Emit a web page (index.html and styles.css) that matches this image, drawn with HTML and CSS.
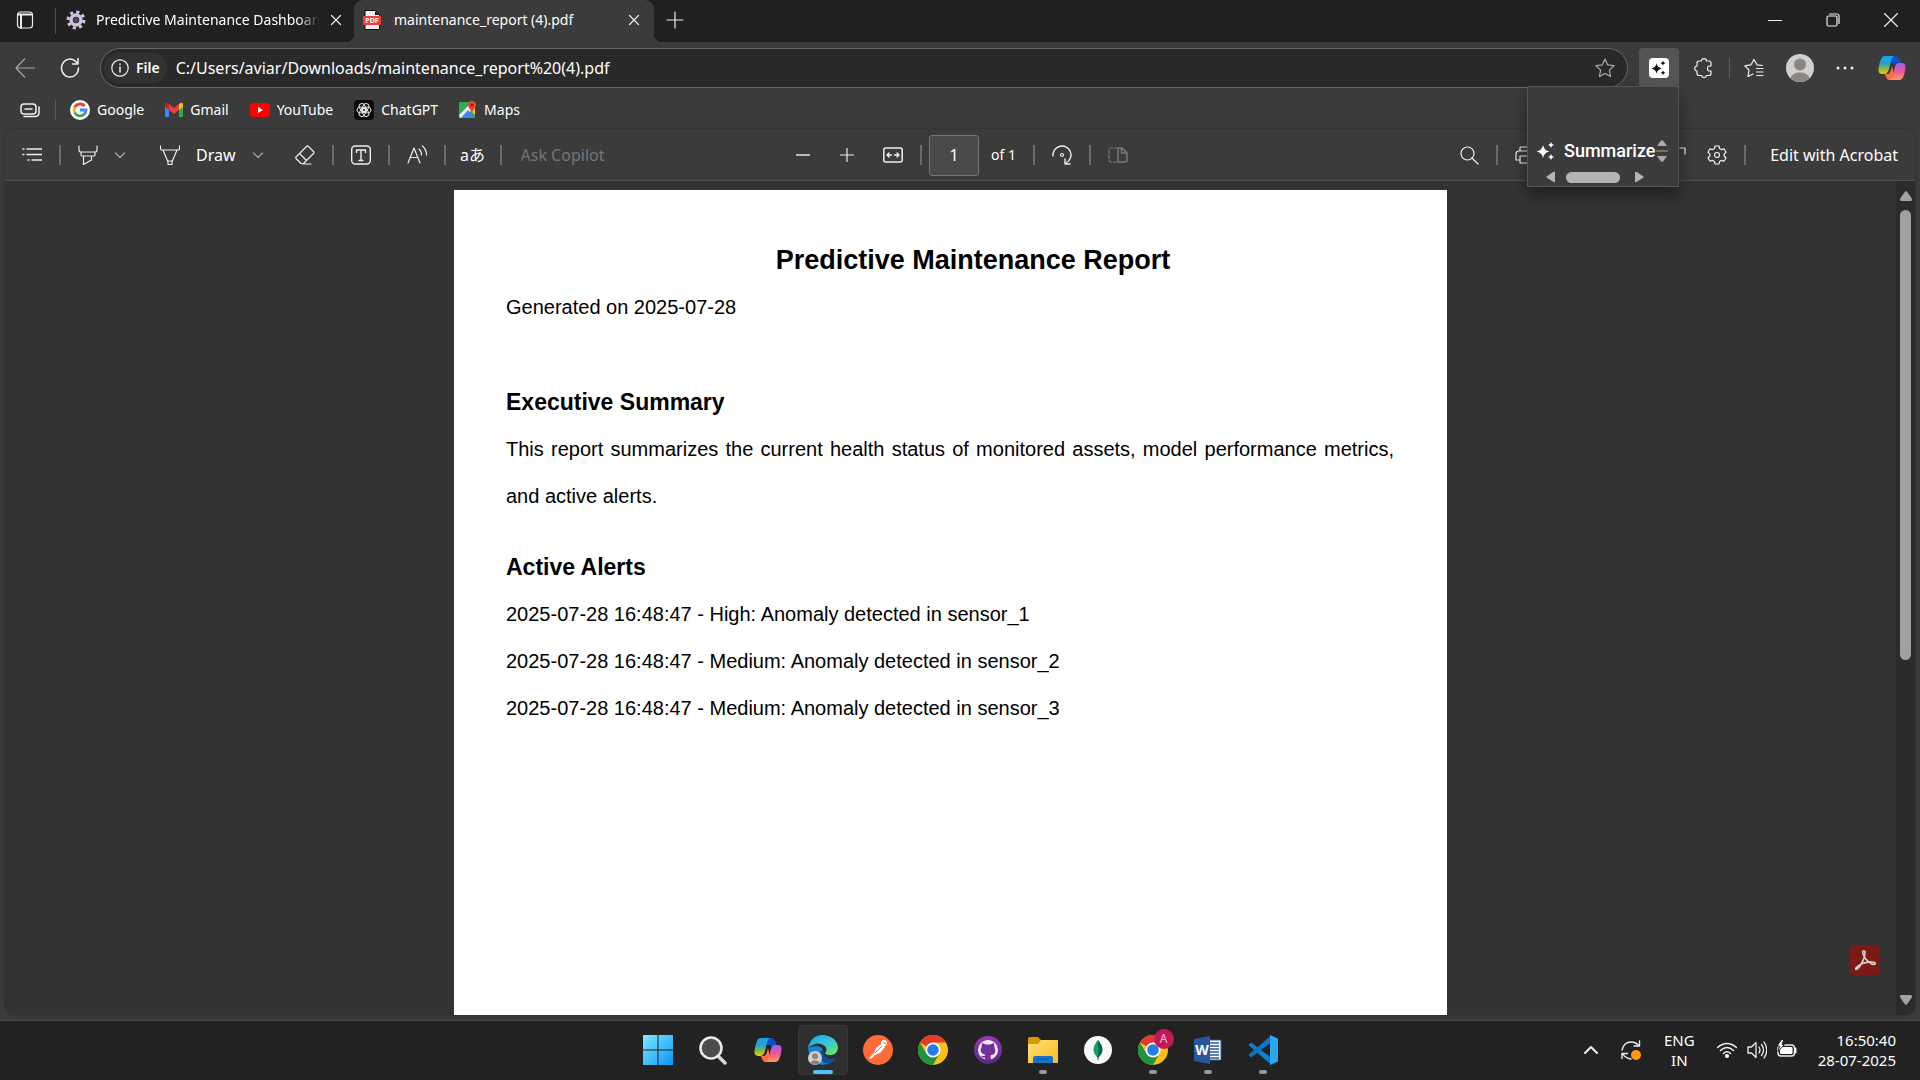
FILE: index.html
```html
<!DOCTYPE html>
<html lang="en">
<head>
<meta charset="utf-8">
<title>maintenance_report (4).pdf</title>
<link rel="stylesheet" href="styles.css">
</head>
<body>
<svg class="defs" aria-hidden="true">
  <defs>
    <linearGradient id="cpA" x1="0" y1="0" x2="0" y2="1"><stop offset="0" stop-color="#13a5ee"/><stop offset=".4" stop-color="#2b9fd0"/><stop offset=".7" stop-color="#7cba4c"/><stop offset="1" stop-color="#fdc500"/></linearGradient>
    <linearGradient id="cpB" x1="0" y1="0" x2="0" y2="1"><stop offset="0" stop-color="#a35af0"/><stop offset=".5" stop-color="#e85a9c"/><stop offset="1" stop-color="#ff9a52"/></linearGradient>
    <linearGradient id="win" x1="0" y1="0" x2="1" y2="1"><stop offset="0" stop-color="#7cecff"/><stop offset="1" stop-color="#0a93f5"/></linearGradient>
    <linearGradient id="edgeTop" x1="0" y1="0" x2="1" y2="1"><stop offset="0" stop-color="#1da5e0"/><stop offset=".5" stop-color="#35c4dc"/><stop offset="1" stop-color="#6ff04c"/></linearGradient>
    <linearGradient id="fold" x1="0" y1="0" x2="1" y2="1"><stop offset="0" stop-color="#ffe07a"/><stop offset="1" stop-color="#fdbc1d"/></linearGradient>
    <linearGradient id="gh" x1="0" y1="0" x2="0" y2="1"><stop offset="0" stop-color="#9a3bb5"/><stop offset="1" stop-color="#56267f"/></linearGradient>
    <symbol id="copilot" viewBox="0 0 28 28">
      <path d="M17 2h-2L12 9l5 0 1 4h5c0-5-2-11-6-11z" fill="#0f4fd0"/>
      <path d="M7 2h9c-2 1-3 4-4 9-1 5-2 8-5 9H4c-4 0-4-4-3-8C2.500 5 4 2 7 2z" fill="url(#cpA)"/>
      <path d="M11 26c-3 0-3-6-5-6h4c2 0 3-4 4-8l2 8-2 6z" fill="#ff6b3d"/>
      <path d="M21 9h3c4 0 4 4 3 8-1.500 7-3 9-6 9h-10c3-1 4-4 5-9 1-5 2-8 5-8z" fill="url(#cpB)"/>
    </symbol>
    <symbol id="chrome" viewBox="0 0 30 30">
      <circle cx="15" cy="15" r="15" fill="#fbc116"/>
      <path d="M15 15 2 7.500A15 15 0 0 1 28 7.500H15z" fill="#e33b2e"/>
      <path d="M2 7.500A15 15 0 0 0 15 30l6.500-11.200L15 15 8.500 18.800z" fill="#229342"/>
      <circle cx="15" cy="15" r="7.500" fill="#fff"/><circle cx="15" cy="15" r="5.800" fill="#2a7bea"/>
    </symbol>
    <symbol id="close" viewBox="0 0 12 12"><path d="M1.500 1.500l9 9M10.500 1.500l-9 9"/></symbol>
    <symbol id="chev" viewBox="0 0 12 12"><path d="M1.500 4 6 8.500 10.500 4"/></symbol>
    <symbol id="person" viewBox="0 0 28 28"><circle cx="14" cy="14" r="14" fill="#d2d0cf"/><circle cx="14" cy="10.500" r="6" fill="#8b8683"/><path d="M4.500 24a10 8 0 0 1 19 0 14 14 0 0 1-19 0z" fill="#8b8683"/></symbol>
    <symbol id="sparkle" viewBox="0 0 20 20"><path d="M7 4q1 5.500 6.500 6.500Q8 11.500 7 17 6 11.500.5 10.500 6 9.500 7 4zM15 1q.5 2.500 3 3-2.500.5-3 3-.5-2.500-3-3 2.500-.5 3-3zM15 13q.5 2.500 3 3-2.500.5-3 3-.5-2.500-3-3 2.500-.5 3-3z" fill="currentColor" stroke="none"/></symbol>
    <symbol id="cog" viewBox="0 0 20 20"><path d="M8 1h4l.6 2.600 1.700 1L17 3.800l2 3.500-1.900 1.800v1.900L19 12.700l-2 3.500-2.700-.8-1.700 1L12 19H8l-.6-2.600-1.700-1-2.700.8-2-3.500L2.900 11V9.100L1 7.300l2-3.500 2.700.8 1.700-1z"/><circle cx="10" cy="10" r="2.500"/></symbol>
  </defs>
</svg>
<div class="screen">
  <header class="tabstrip">
    <button class="tab-menu" aria-label="Tab actions"><svg class="ic i18" viewBox="0 0 18 18"><rect x="1.500" y="1" width="15" height="16" rx="3"/><path d="M2 3.500h14M5 4v13" stroke-width="2"/></svg></button>
    <span class="divider"></span>
    <div class="tab">
      <svg class="i20" viewBox="0 0 20 20"><g fill="none" stroke="#cfc3df"><circle cx="10" cy="10" r="5" stroke-width="3.500"/><circle cx="10" cy="10" r="8" stroke-width="3" stroke-dasharray="3.140 3.140"/></g><circle cx="10" cy="10" r="2.800" fill="#51435f"/></svg>
      <span class="tab-title fade">Predictive Maintenance Dashboard</span>
      <button aria-label="Close tab"><svg class="ic i12"><use href="#close"/></svg></button>
    </div>
    <div class="tab active">
      <svg class="i20" viewBox="0 0 20 20"><path d="M3 .5h10.500l4 4v15H3z" fill="#eee" stroke="#111"/><path d="M13 1v4h4.500z" fill="#111"/><rect x="1" y="6" width="18" height="9" rx="1" fill="#f13b3f"/><text x="10" y="13" text-anchor="middle" class="pdf-mark">PDF</text></svg>
      <span class="tab-title">maintenance_report (4).pdf</span>
      <button aria-label="Close tab"><svg class="ic i12"><use href="#close"/></svg></button>
    </div>
    <button class="new-tab" aria-label="New tab"><svg class="ic i18" viewBox="0 0 18 18"><path d="M9 1v16M1 9h16"/></svg></button>
    <div class="window-buttons">
      <button aria-label="Minimize"><svg class="ic i14" viewBox="0 0 14 14"><path d="M.5 7.500h13"/></svg></button>
      <button aria-label="Restore"><svg class="ic i14" viewBox="0 0 14 14"><rect x="1" y="3" width="10" height="10" rx="1.500"/><path d="M3.500 1h7.500q2 0 2 2v7.500"/></svg></button>
      <button aria-label="Close"><svg class="ic i14" viewBox="0 0 14 14"><path d="M.5.5l13 13M13.500.5l-13 13"/></svg></button>
    </div>
  </header>

  <div class="address-row">
    <button class="nav dim" aria-label="Back"><svg class="ic i20" viewBox="0 0 20 20"><path d="M19.500 10H1M9.500 1 1 10l8.500 9"/></svg></button>
    <button class="nav" aria-label="Refresh"><svg class="ic i20" viewBox="0 0 20 20"><path d="M18.500 10A8.500 9 0 1 1 15 2.800L18 6M18 .5V6h-5.500" stroke-width="1.500"/></svg></button>
    <div class="omnibox">
      <button class="site-info"><svg class="ic i18" viewBox="0 0 18 18"><circle cx="9" cy="9" r="8.200"/><path d="M9 8v5M9 5v.5" stroke-width="1.500"/></svg>File</button>
      <input class="url" aria-label="Address" value="C:/Users/aviar/Downloads/maintenance_report%20(4).pdf">
      <button class="star" aria-label="Add to favorites"><svg class="ic i20" viewBox="0 0 20 20"><path d="M10 1l2.700 5.900 6.300.8-4.600 4.400 1.200 6.400L10 15.400l-5.600 3.100 1.200-6.400L1 7.700l6.300-.8z"/></svg></button>
    </div>
    <div class="extension">
      <button class="ext-button" aria-label="Summarizer extension"><span class="ext-mark"><svg class="i16"><use href="#sparkle"/></svg></span></button>
      <div class="popup">
        <div class="popup-main"><svg class="i20"><use href="#sparkle"/></svg><span>Summarize</span>
          <svg class="v-scroll" viewBox="0 0 12 22"><path d="M6 0q1 0 5 6H1q4-6 5-6zM6 22q1 0 5-6H1q4 6 5 6z" fill="#a8a8a8"/><path d="M0 11h12" stroke="#a8a8a8"/></svg></div>
        <div class="h-scroll"><svg viewBox="0 0 10 12"><path d="M9 1v10q-1 1-9-5 8-6 9-5z"/></svg><span></span><svg viewBox="0 0 10 12"><path d="M1 1v10q1 1 9-5Q2 0 1 1z"/></svg></div>
      </div>
    </div>
    <button class="nav puzzle" aria-label="Extensions"><svg class="ic i20" viewBox="0 0 20 20"><path d="M5 3h2.500q0-2.300 2.500-2.300T12.500 3H15q2 0 2 2v3h-1.500q-2 0-2 2.500t2 2.500H17v2.500q0 2-2 2h-2.500q0 1.800-2.500 1.800t-2.500-1.800H5q-2 0-2-2V13Q.8 13 .8 10.500T3 8V5q0-2 2-2z"/></svg></button>
    <span class="divider low"></span>
    <button class="nav fav" aria-label="Favorites"><svg class="ic i20" viewBox="0 0 20 20"><path d="M18.500 7.500l-5.500-.7L10 1.500 7 6.800.8 7.800 5 12l-1 6.500 5-2.500M12.500 10.500H19M12.500 14H19M12.500 17.500H19"/></svg></button>
    <button class="nav" aria-label="Profile"><svg class="i28"><use href="#person"/></svg></button>
    <button class="nav" aria-label="Settings and more"><svg class="i18" viewBox="0 0 18 18" fill="#eee"><circle cx="2" cy="9" r="1.500"/><circle cx="9" cy="9" r="1.500"/><circle cx="16" cy="9" r="1.500"/></svg></button>
    <button class="nav copilot" aria-label="Copilot"><svg class="i28"><use href="#copilot"/></svg></button>
  </div>

  <nav class="bookmarks">
    <button aria-label="Workspaces"><svg class="ic i20" viewBox="0 0 20 20"><rect x="1" y="4" width="15" height="10" rx="3" stroke-width="1.500"/><path d="M5 9h7M4 16.500h11q4 0 4-4V7" stroke-width="1.500"/></svg></button>
    <span class="divider low"></span>
    <a href="#google"><svg class="i20" viewBox="0 0 20 20"><circle cx="10" cy="10" r="10" fill="#fff"/><g fill="none" stroke-width="2.800"><path d="M14.600 6A6 6 0 0 0 4.700 7.500" stroke="#ea4335"/><path d="M4.700 7.300a6 6 0 0 0 0 5.400" stroke="#fbbc05"/><path d="M4.700 12.500a6 6 0 0 0 9.500 1.800" stroke="#34a853"/><path d="M14 14.500A6 6 0 0 0 16 10h-6" stroke="#4285f4"/></g></svg>Google</a>
    <a href="#gmail"><svg class="i18" viewBox="0 0 18 18"><path d="M0 4v11q0 1 1 1h3V7z" fill="#4285f4"/><path d="M18 4v11q0 1-1 1h-3V7z" fill="#34a853"/><path d="M4 3v6l5 4 5-4V3L9 7z" fill="#ea4335"/><path d="M0 4q0-3 2.500-2L4 3v6L0 6z" fill="#c5221f"/><path d="M18 4q0-3-2.500-2L14 3v6l4-3z" fill="#fbbc04"/></svg>Gmail</a>
    <a href="#youtube"><svg class="i20" viewBox="0 0 20 20"><rect y="3" width="20" height="14" rx="3.500" fill="#f00"/><path d="M8 7l5 3-5 3z" fill="#fff"/></svg>YouTube</a>
    <a href="#chatgpt"><svg class="i20" viewBox="0 0 20 20"><rect width="20" height="20" rx="4" fill="#0b0b0b"/><g fill="none" stroke="#eee" stroke-width=".9"><rect x="7.200" y="3" width="5.600" height="8.500" rx="2.800" transform="rotate(30 10 10)"/><rect x="7.200" y="3" width="5.600" height="8.500" rx="2.800" transform="rotate(90 10 10)"/><rect x="7.200" y="3" width="5.600" height="8.500" rx="2.800" transform="rotate(150 10 10)"/><rect x="7.200" y="3" width="5.600" height="8.500" rx="2.800" transform="rotate(210 10 10)"/><rect x="7.200" y="3" width="5.600" height="8.500" rx="2.800" transform="rotate(270 10 10)"/><rect x="7.200" y="3" width="5.600" height="8.500" rx="2.800" transform="rotate(330 10 10)"/></g></svg>ChatGPT</a>
    <a href="#maps"><svg class="i18" viewBox="0 0 18 18"><rect y="1" width="16" height="16" rx="1" fill="#34a853"/><path d="M0 14 12 2h4v4L4 17H1z" fill="#eceff1"/><path d="M9 9l7 8H2z" fill="#4285f4"/><path d="M11 9l5 5V5z" fill="#fbc02d"/><path d="M13 0a4 4 0 0 1 4 4c0 3-3 4-4 8-1-4-4-5-4-8a4 4 0 0 1 4-4z" fill="#ea4335"/><circle cx="13" cy="4" r="1.500" fill="#8e1f18"/></svg>Maps</a>
  </nav>

  <main class="viewer">
    <div class="toolbar">
      <div class="tools left">
        <button aria-label="Contents"><svg class="ic i20" viewBox="0 0 20 20"><path d="M5 4h15M5 9.500h15M10 15h10M1 4h1M1 9.500h1M6 15h1" stroke-width="1.500"/></svg></button>
        <span class="divider"></span>
        <div class="pair"><button aria-label="Highlight"><svg class="ic i20" viewBox="0 0 20 20"><path d="M1 1v4q0 2 2 2h14q2 0 2-2V1M3 7v3q0 1 1 1h12q1 0 1-1V7M5.500 11v8.500l8-4.500v-4"/></svg></button>
        <button aria-label="Highlight options"><svg class="ic i12 dim"><use href="#chev"/></svg></button></div>
        <div class="pair draw"><button><svg class="ic i20" viewBox="0 0 20 20"><path d="M.5 1v2.500q0 1.500 1.500 1.500h16q1.500 0 1.500-1.500V1M3 5l5 12v2.500h4V17l5-12M8 16h4"/></svg>Draw</button>
        <button aria-label="Draw options"><svg class="ic i12 dim"><use href="#chev"/></svg></button></div>
        <button class="erase" aria-label="Erase"><svg class="ic i20" viewBox="0 0 20 20"><path d="M1 12 11.500 1.500q1-1 2 0l5 5q1 1 0 2L8.500 18.500H6l-5-5q-.5-.7 0-1.500zM4.500 8.500l7 7M8 19h8"/></svg></button>
        <span class="divider"></span>
        <button aria-label="Add text"><svg class="ic i20" viewBox="0 0 20 20"><rect x=".7" y="1" width="18.600" height="18" rx="3.500" stroke-width="1.400"/><path d="M5.500 7.500V5h9v2.500M10 5v10.500M8 15.500h4" stroke-width="1.400"/></svg></button>
        <span class="divider"></span>
        <button aria-label="Read aloud"><svg class="ic i20" viewBox="0 0 20 20"><path d="M1 18 7 3l6 15M3.500 12.500h7M12 4q2.500 2 2.500 6M15.500 1q4 3.500 4 9"/></svg></button>
        <span class="divider"></span>
        <button class="translate" aria-label="Translate">aあ</button>
        <span class="divider"></span>
        <input class="ask" aria-label="Ask Copilot" placeholder="Ask Copilot">
      </div>
      <div class="tools center">
        <button aria-label="Zoom out"><svg class="ic i14" viewBox="0 0 14 14"><path d="M0 7h14" stroke-width="2" stroke="#bbb"/></svg></button>
        <button class="plus" aria-label="Zoom in"><svg class="ic i14" viewBox="0 0 14 14"><path d="M0 7h14M7 0v14"/></svg></button>
        <button class="fit" aria-label="Fit to width"><svg class="ic i20" viewBox="0 0 20 20"><rect x=".8" y="3" width="18.400" height="14" rx="2" stroke-width="1.500"/><path d="M8.500 10H4M6 8l-2 2 2 2M11.500 10H16M14 8l2 2-2 2" stroke-width="1.400"/></svg></button>
        <span class="divider"></span>
        <input class="page-no" aria-label="Page" value="1"><span class="of">of 1</span>
        <span class="divider"></span>
        <button aria-label="Rotate"><svg class="ic i20" viewBox="0 0 20 20"><path d="M1 11A9 9 0 1 1 14 18M13 14v5h5" stroke-width="1.400"/><circle cx="10" cy="10" r="1.500"/></svg></button>
        <span class="divider"></span>
        <button class="off" aria-label="Page view"><svg class="ic i20" viewBox="0 0 20 20"><path d="M10 3H3q-2 0-2 2v10q0 2 2 2h7" stroke-dasharray="3 2"/><path d="M10 3h4l5 5v7q0 2-2 2h-7zM13.500 3v5H19" stroke-width="1.500"/></svg></button>
      </div>
      <div class="tools right">
        <button aria-label="Search"><svg class="ic i20" viewBox="0 0 20 20"><circle cx="8.500" cy="8.500" r="6.500"/><path d="M13 13l6 6"/></svg></button>
        <span class="divider"></span>
        <button aria-label="Print"><svg class="ic i20" viewBox="0 0 20 20"><path d="M5 6V3q0-1 1-1h8q1 0 1 1v3M4 15H1V9q0-3 3-3h12q3 0 3 3v6h-3M5 11h10v7H5z"/></svg></button>
        <button class="full" aria-label="Full screen"><svg class="ic i20" viewBox="0 0 20 20"><path d="M1 8V3h5M13 3h5v6M1 13v5h5"/></svg></button>
        <button aria-label="Settings"><svg class="ic i20"><use href="#cog"/></svg></button>
        <span class="divider"></span>
        <button class="acrobat-edit">Edit with Acrobat</button>
      </div>
    </div>
    <div class="canvas">
      <div class="scroll-view">
        <article class="sheet">
          <h1>Predictive Maintenance Report</h1>
          <p>Generated on 2025-07-28</p>
          <h2 class="summary">Executive Summary</h2>
          <p class="justified">This report summarizes the current health status of monitored assets, model performance metrics, and active alerts.</p>
          <h2 class="alerts">Active Alerts</h2>
          <p>2025-07-28 16:48:47 - High: Anomaly detected in sensor_1</p>
          <p>2025-07-28 16:48:47 - Medium: Anomaly detected in sensor_2</p>
          <p>2025-07-28 16:48:47 - Medium: Anomaly detected in sensor_3</p>
        </article>
      </div>
      <div class="scrollbar"><svg class="i12" viewBox="0 0 12 10"><path d="M6 0q1 0 6 8 0 2-1 2H1q-1 0-1-2Q5 0 6 0z"/></svg><div class="track"><span class="thumb"></span></div><svg class="i12" viewBox="0 0 12 10"><path d="M6 10q1 0 6-8 0-2-1-2H1Q0 0 0 2q5 8 6 8z"/></svg></div>
      <button class="acrobat" aria-label="Open in Acrobat"><svg viewBox="0 0 30 30"><path d="M13 6q2-1 2 2c0 5-4 13-8 16q-2 1-1-1c2-3 10-7 17-6q3 .5 2 2c-3 1.500-10-4-12-10q-.5-2.500 0-3z" fill="none" stroke="#d5cfcf" stroke-width="1.700"/></svg></button>
    </div>
  </main>

  <footer class="taskbar">
    <div class="apps">
      <button aria-label="Start"><svg class="i30" viewBox="0 0 30 30"><path d="M0 0h14.500v14.500H0zM15.500 0H30v14.500H15.500zM0 15.500h14.500V30H0zM15.500 15.500H30V30H15.500z" fill="url(#win)"/></svg></button>
      <button aria-label="Search"><svg class="i30" viewBox="0 0 30 30"><path d="M19 20l8 8" stroke="#d6dadd" stroke-width="3.500" stroke-linecap="round"/><circle cx="13" cy="13" r="10.500" fill="#4b4c4d" stroke="#e8eaec" stroke-width="2.500"/></svg></button>
      <button aria-label="Copilot"><svg class="i28"><use href="#copilot"/></svg></button>
      <button class="current" aria-label="Edge"><svg class="i30" viewBox="0 0 30 30"><path d="M0 13Q1 26 12 29.500q9 1.500 16-6-8 3-12-1-3-4-1-8-5-6-15-1.500z" fill="#1684d6"/><path d="M13 15q-3 7 3 13 8 2 12-5-7 2-10-1-3-2-2-5z" fill="#0b4f96"/><path d="M0 13Q3 0 15 0q13 1 15 12 0 7-7 8-5 0-6-2 3-3 0-7Q9 5 0 13z" fill="url(#edgeTop)"/><g transform="translate(0 16) scale(.5)"><use href="#person" width="28" height="28"/></g></svg></button>
      <button aria-label="Postman"><svg class="i30" viewBox="0 0 30 30"><circle cx="15" cy="15" r="15" fill="#ff6c37"/><circle cx="21" cy="8" r="3" fill="#fff"/><path d="M18 9l4 3-5 6-5 2-4 4-2-1 5-5 2-5z" fill="#fff"/><path d="M12 18l7-7M20 7l3 2" stroke="#ff6c37"/></svg></button>
      <button aria-label="Chrome"><svg class="i30"><use href="#chrome"/></svg></button>
      <button aria-label="GitHub Desktop"><svg class="i28" viewBox="0 0 28 28"><circle cx="14" cy="14" r="14" fill="url(#gh)"/><circle cx="14" cy="14" r="10" fill="#f2edf6"/><path d="M8 7l4 1.500h4L20 7l.5 4q3 7-4 8.500l.5 5h-6v-3q-3 1-4-2 2 1 4 0l.5-.500Q4.500 17 7.500 11z" fill="#75319a"/></svg></button>
      <button class="running" aria-label="File Explorer"><svg class="i30" viewBox="0 0 30 30"><path d="M0 4q0-2 2-2h8l3 3v7H0z" fill="#dc9700"/><path d="M0 9h10l3-4h17v23H0z" fill="url(#fold)"/><path d="M5 28v-5q0-2 2-2h16q2 0 2 2v5z" fill="#1474c9"/><path d="M9 24h12" stroke="#0a4d94"/></svg></button>
      <button aria-label="MongoDB Compass"><svg class="i28" viewBox="0 0 28 28"><circle cx="14" cy="14" r="14" fill="#f8f8f8"/><path d="M14 4q-9 10 0 18z" fill="#10a35f"/><path d="M14 4q9 10 0 18z" fill="#00684a"/><path d="M14 20v4" stroke="#00684a"/></svg></button>
      <button class="running" aria-label="Chrome, profile A"><svg class="i30"><use href="#chrome"/></svg><span class="badge">A</span></button>
      <button class="running" aria-label="Word"><svg class="i28" viewBox="0 0 28 28"><path d="M14 4h13v20H14z" fill="#fff" stroke="#2b579a"/><path d="M16 7h9M16 10h9M16 13h9M16 16h9M16 19h9M16 22h9" stroke="#2b579a" stroke-width="1.500"/><path d="M0 3l16-3v28L0 25z" fill="#2b579a"/><text class="word-mark" x="8" y="19" text-anchor="middle">W</text></svg></button>
      <button class="running" aria-label="Visual Studio Code"><svg class="i30" viewBox="0 0 30 30"><path d="M1 10l2-2 20 15v6z" fill="#1080cf" stroke="#1080cf" stroke-linejoin="round"/><path d="M1 20l2 2L23 7V1z" fill="#0a77c4" stroke="#0a77c4" stroke-linejoin="round"/><path d="M22 0l8 3.500v23L22 30z" fill="#2aa6f2"/></svg></button>
    </div>
    <div class="tray">
      <button aria-label="Hidden icons"><svg class="ic i14" viewBox="0 0 14 14"><path d="M1 10l6-6 6 6" stroke-width="2"/></svg></button>
      <button class="update" aria-label="Update available"><svg class="ic i20" viewBox="0 0 20 20"><path d="M1 10Q3 2 10 2q5 0 8 4M18.500 1v5H13M1 18.500v-5h5.500M2 14q2 4 8 5" stroke-width="1.400"/><circle cx="15" cy="15" r="5" fill="#ff9a0c" stroke="none"/></svg></button>
      <button class="lang">ENG<br>IN</button>
      <button class="status" aria-label="Network, volume, battery">
        <svg class="ic i20" viewBox="0 0 20 20"><path d="M.5 7.500q9.500-8 19 0M3.500 10.500q6.500-6 13 0M6.500 13.500q3.500-3.500 7 0" stroke-width="1.600"/><circle cx="10" cy="16" r="1.500" fill="#fff"/></svg>
        <svg class="ic i20" viewBox="0 0 20 20"><path d="M1 7h3.500L9 2.500v15L4.500 13H1zM12 7q2 3 0 6M14.500 4.500q4 5.500 0 11M17 2q5.500 8 0 16" stroke-width="1.300"/></svg>
        <svg class="ic i20" viewBox="0 0 20 20"><rect x="1" y="5" width="16.500" height="11" rx="3" stroke-width="1.400"/><rect x="3" y="7" width="12.500" height="7" rx="1" fill="#fff" stroke="none"/><path d="M18.500 8.500v4" stroke-width="2"/><path d="M4.500-.5 0 6h2.500L1 11.500 7.500 4.500H5l2-5z" fill="#fff" stroke="#222" stroke-width="1"/></svg>
      </button>
      <button class="clock">16:50:40<br>28-07-2025</button>
    </div>
  </footer>
</div>
</body>
</html>
```
FILE: styles.css
```css
* { box-sizing: border-box; }
body { margin: 0; background: #3b3b3b; color: #fff; font: 14px/20px "Noto Sans", "Noto Sans CJK JP", sans-serif; }
button, input { font: inherit; color: inherit; background: none; border: 0; padding: 0; margin: 0; min-width: 0; }
button { display: flex; align-items: center; justify-content: center; flex-shrink: 0; white-space: nowrap; }
a { color: inherit; text-decoration: none; }
svg { display: block; flex-shrink: 0; }
.defs { position: absolute; width: 0; height: 0; }
.ic { fill: none; stroke: #eee; stroke-width: 1.200; stroke-linecap: round; stroke-linejoin: round; }
.i12 { width: 12px; height: 12px; }
.i14 { width: 14px; height: 14px; }
.i16 { width: 16px; height: 16px; }
.i18 { width: 18px; height: 18px; }
.i20 { width: 20px; height: 20px; }
.i28 { width: 28px; height: 28px; }
.i30 { width: 30px; height: 30px; }
.dim { opacity: .6; }
.off { opacity: .35; }
.divider { width: 2px; height: 20px; background: #6b6b6b; flex-shrink: 0; }
.divider.low { width: 1px; background: #5c5c5c; }

.screen { height: 100vh; display: flex; flex-direction: column; overflow: hidden; }

/* tab strip */
.tabstrip { height: 42px; display: flex; background: #202020; flex-shrink: 0; }
.tabstrip > button, .tabstrip > .tab { height: 40px; }
.tabstrip > .divider { width: 1px; height: 26px; margin-top: 8px; background: #4c4c4c; }
.tab-menu { width: 50px; margin-right: 5px; }
.tab { display: flex; align-items: center; gap: 10px; width: 298px; padding: 0 12px 0 10px; }
.tab-title { flex: 1; min-width: 0; overflow: hidden; white-space: nowrap; }
.fade { mask-image: linear-gradient(90deg, #000 90%, transparent); }
.tabstrip > .tab.active { width: 300px; height: 42px; padding: 0 14px 2px 8px; gap: 12px; background: #3b3b3b; border-radius: 9px 9px 0 0; position: relative; }
.tab.active::before, .tab.active::after { content: ""; position: absolute; bottom: 0; width: 8px; height: 8px; }
.tab.active::before { right: 100%; background: radial-gradient(circle at 0 0, #202020 8px, #3b3b3b 8px); }
.tab.active::after { left: 100%; background: radial-gradient(circle at 100% 0, #202020 8px, #3b3b3b 8px); }
.pdf-mark { font: bold 7px "Noto Sans", sans-serif; fill: #fff; }
.new-tab { width: 42px; }
.window-buttons { margin-left: auto; display: flex; height: 40px; }
.window-buttons button { width: 58px; }

/* address row */
.address-row { height: 52px; padding: 6px 3px 6px 2px; display: flex; flex-shrink: 0; }
.nav { width: 45px; height: 40px; }
.omnibox { flex: 1; min-width: 0; height: 40px; margin: 0 11px 0 8px; display: flex; align-items: center; border: 1px solid #686868; border-radius: 20px; background: #292929; padding: 0 12px 0 3px; font-size: 16px; }
.site-info { height: 30px; gap: 7px; padding: 0 7px 0 7px; border-radius: 15px; background: #323232; font-size: 14px; font-weight: 600; }
.url { flex: 1; height: 30px; margin-left: 9px; outline: 0; }
.star { opacity: .65; }
.extension { position: relative; width: 40px; height: 40px; }
.ext-button { width: 40px; height: 40px; background: #555; border-radius: 4px 4px 0 0; }
.ext-mark { width: 20px; height: 20px; border-radius: 4px; background: #fff; color: #111; display: grid; place-items: center; }
.popup { position: absolute; z-index: 5; top: 38px; right: 0; width: 152px; height: 101px; padding: 52px 0 0 8px; border: 1px solid #555; background: #3b3b3b; box-shadow: 0 8px 16px #0006; }
.popup-main { display: flex; align-items: center; height: 24px; font: 500 18px/24px Roboto, sans-serif; }
.popup-main span { margin-left: 8px; }
.v-scroll { width: 12px; height: 22px; margin-left: 1px; }
.h-scroll { display: flex; align-items: center; gap: 10px; padding: 8px 0 0 10px; }
.h-scroll svg { width: 10px; height: 12px; fill: #b4b4b4; }
.h-scroll span { width: 54px; height: 11px; border-radius: 6px; background: #b4b4b4; margin-right: 4px; }
.puzzle { width: 50px; }
.address-row > .divider { margin-top: 10px; }
.fav { width: 47px; }
.copilot { width: 50px; }

/* bookmarks */
.bookmarks { height: 35px; padding: 0 20px 4px; display: flex; align-items: center; flex-shrink: 0; }
.bookmarks .divider { margin: 0 14px 0 15px; }
.bookmarks a { display: flex; align-items: center; gap: 7px; margin-right: 21px; }

/* PDF viewer */
.viewer { flex: 1; min-height: 0; margin: 0 5px 5px; display: flex; flex-direction: column; border-radius: 10px; background: #333; overflow: hidden; box-shadow: 0 0 2px #222; }
.toolbar { height: 52px; padding-top: 1px; display: grid; grid-template-columns: 1fr auto 1fr; background: #3b3b3b; border-bottom: 1px solid #505050; font-size: 16px; flex-shrink: 0; }
.tools { display: flex; align-items: center; min-width: 0; gap: 17px; }
.left { padding-left: 17px; }
.pair { display: flex; align-items: center; gap: 14px; }
.pair .i12 { margin: 0 2px; }
.draw { margin-left: 15px; }
.draw > button:first-child { gap: 16px; }
.erase { margin-left: 12px; }
.translate { width: 20px; }
.ask { width: 140px; margin-left: 2px; }
.ask::placeholder { color: #757575; opacity: 1; }
.center { padding: 0 12px 0 16px; }
.plus { margin-left: 13px; }
.fit { margin-left: 12px; }
.page-no { width: 50px; height: 41px; margin-left: -10px; text-align: center; border: 1px solid #757575; border-radius: 3px; background: #4a4a4a; }
.of { margin: 0 0 0 -5px; white-space: nowrap; font-size: 14px; }
.right { justify-content: flex-end; padding-right: 17px; }
.full { margin: 0 3px 0 115px; }
.acrobat-edit { margin-left: 7px; }

.canvas { flex: 1; min-height: 0; display: flex; position: relative; }
.scroll-view { flex: 1; min-width: 0; padding-top: 9px; display: flex; justify-content: center; overflow: hidden; }
.sheet { width: 100%; max-width: 993px; min-height: 1404px; padding: 47px 53px 0 52px; background: #fff; color: #000; font: 20px/47px "Liberation Sans", Arial, sans-serif; }
.sheet h1, .sheet h2, .sheet p { margin: 0; }
.sheet h1 { font-size: 27px; line-height: 47px; text-align: center; padding-left: 46px; }
.sheet h2 { font-size: 23px; line-height: 47px; }
.sheet .summary { margin-top: 48px; }
.sheet .alerts { margin-top: 24px; }
.justified { text-align: justify; }
.scrollbar { width: 19px; padding: 9px 0; background: #2b2b2b; display: flex; flex-direction: column; align-items: center; gap: 8px; fill: #a3a3a3; }
.track { flex: 1; width: 11px; }
.thumb { display: block; height: 58%; border-radius: 6px; background: #a0a0a0; }
.acrobat { position: absolute; right: 35px; bottom: 40px; width: 30px; height: 30px; border-radius: 4px; background: #7e1a16; }
.acrobat svg { width: 30px; height: 30px; }

/* taskbar */
.taskbar { height: 60px; padding-bottom: 2px; display: grid; grid-template-columns: 1fr auto 1fr; align-items: center; background: #222; border-top: 1px solid #484848; flex-shrink: 0; }
.apps { grid-column: 2; display: flex; gap: 5px; }
.apps button { width: 50px; height: 50px; border-radius: 5px; position: relative; }
.apps .current { background: #2e2e2e; box-shadow: inset 0 0 0 1px #383838; }
.current::after, .running::after { content: ""; position: absolute; bottom: 1px; left: 21px; width: 8px; height: 4px; border-radius: 2px; background: #999; }
.current::after { left: 15px; width: 20px; background: #4cc2ff; }
.badge { position: absolute; top: 4px; right: 4px; width: 20px; height: 20px; border-radius: 10px; background: #c2185b; color: #f3c5d6; font-size: 12px; }
.word-mark { font: bold 14px "Noto Sans", sans-serif; fill: #fff; }
.tray { display: flex; align-items: center; justify-content: flex-end; padding-right: 24px; font-size: 15px; }
.update { margin-left: 23px; }
.lang { margin-left: 23px; }
.status { gap: 10px; margin-left: 22px; }
.clock { margin-left: 21px; text-align: right; }
```
